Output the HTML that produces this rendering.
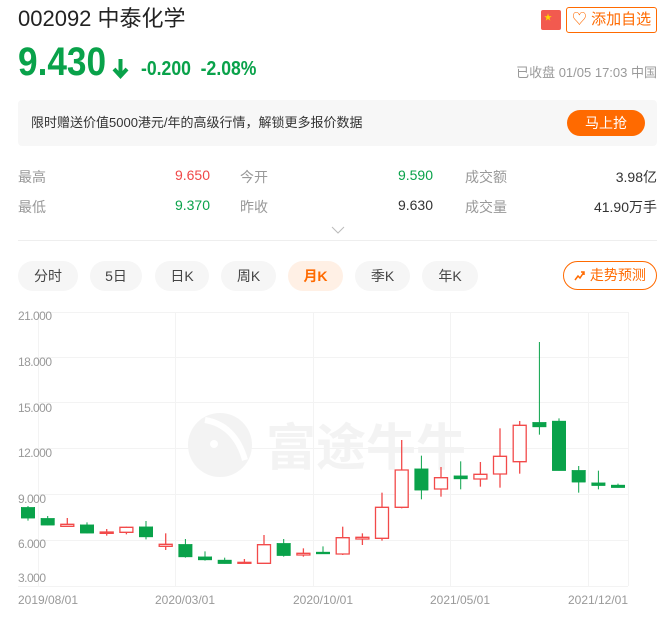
<!DOCTYPE html>
<html><head><meta charset="utf-8"><style>
*{margin:0;padding:0;box-sizing:border-box}
body{width:659px;height:621px;overflow:hidden;background:#fff;font-family:"Liberation Sans","Noto Sans CJK SC",sans-serif;position:relative;color:#333}
.a{position:absolute;white-space:nowrap}
.g{color:#09a24a}
.lab{color:#999;font-size:14px}
.val{font-size:14px;text-align:right}
.tab{position:absolute;top:261px;height:30px;border-radius:15px;background:#f6f6f6;font-size:14px;line-height:30px;text-align:center;color:#444}
</style></head><body>
<div class="a" style="left:18px;top:5px;font-size:22px;line-height:28px;color:#222">002092 中泰化学</div>
<div class="a" style="left:541px;top:10px;width:20px;height:20px;background:#f25a4f;border-radius:2px"><span style="position:absolute;left:3px;top:2px;color:#ffd800;font-size:8px">★</span></div>
<div class="a" style="left:566px;top:7px;width:91px;height:26px;border:1px solid #ff6a00;border-radius:3px;color:#ff6a00;font-size:15px;line-height:24px;text-align:center">♡ 添加自选</div>
<div class="a g" style="left:18px;top:40px;font-size:40px;font-weight:bold;line-height:44px;transform:scaleX(.88);transform-origin:left">9.430</div>
<svg class="a" style="left:112px;top:58px" width="17" height="21"><path d="M8.5 1V18M2 11L8.5 18L15 11" stroke="#09a24a" stroke-width="4" fill="none"/></svg>
<div class="a g" style="left:141px;top:58px;font-size:20px;font-weight:bold;line-height:22px;transform:scaleX(.88);transform-origin:left">-0.200&nbsp;&nbsp;-2.08%</div>
<div class="a" style="right:2px;top:62px;font-size:13px;color:#999">已收盘 01/05 17:03 中国</div>
<div class="a" style="left:18px;top:100px;width:639px;height:46px;background:#f7f7f7;border-radius:4px"></div>
<div class="a" style="left:31px;top:114px;font-size:13px;line-height:18px;color:#333">限时赠送价值5000港元/年的高级行情，解锁更多报价数据</div>
<div class="a" style="left:567px;top:110px;width:78px;height:26px;background:#ff6a00;border-radius:13px;color:#fff;font-size:14px;line-height:26px;text-align:center">马上抢</div>
<div class="a lab" style="left:18px;top:167px">最高</div><div class="a val" style="right:449px;top:167px;color:#f04848">9.650</div>
<div class="a lab" style="left:240px;top:167px">今开</div><div class="a val" style="right:226px;top:167px;color:#09a24a">9.590</div>
<div class="a lab" style="left:465px;top:167px">成交额</div><div class="a val" style="right:2px;top:167px">3.98亿</div>
<div class="a lab" style="left:18px;top:197px">最低</div><div class="a val" style="right:449px;top:197px;color:#09a24a">9.370</div>
<div class="a lab" style="left:240px;top:197px">昨收</div><div class="a val" style="right:226px;top:197px">9.630</div>
<div class="a lab" style="left:465px;top:197px">成交量</div><div class="a val" style="right:2px;top:197px">41.90万手</div>
<svg class="a" style="left:331px;top:226px" width="14" height="8"><path d="M1 1L7 7L13 1" stroke="#bbb" fill="none"/></svg>
<div class="a" style="left:18px;top:240px;width:639px;height:1px;background:#eee"></div>
<div class="tab" style="left:18px;width:60px">分时</div>
<div class="tab" style="left:90px;width:52px">5日</div>
<div class="tab" style="left:155px;width:54px">日K</div>
<div class="tab" style="left:221px;width:55px">周K</div>
<div class="tab" style="left:288px;width:55px;background:#fff0e5;color:#ff6a00;font-weight:bold">月K</div>
<div class="tab" style="left:355px;width:55px">季K</div>
<div class="tab" style="left:422px;width:56px">年K</div>
<div class="a" style="left:563px;top:261px;width:94px;height:29px;border:1px solid #ff6a00;border-radius:15px;color:#ff6a00;font-size:14px;line-height:27px;text-align:center"><svg width="12" height="11" style="vertical-align:-1px"><path d="M1 10L4 6L6 8L10 2M7 2H10V5" stroke="#ff6a00" stroke-width="1.5" fill="none"/></svg> 走势预测</div>
<svg class="a" style="left:0;top:300px" width="659" height="321">
<g stroke="#f3f3f3" stroke-width="1">
<line x1="38" y1="12.5" x2="628" y2="12.5"/><line x1="38" y1="57.5" x2="628" y2="57.5"/><line x1="38" y1="102.5" x2="628" y2="102.5"/><line x1="38" y1="148.5" x2="628" y2="148.5"/><line x1="38" y1="194.5" x2="628" y2="194.5"/><line x1="38" y1="240.5" x2="628" y2="240.5"/><line x1="18" y1="286.5" x2="628" y2="286.5"/>
<line x1="38.5" y1="12" x2="38.5" y2="286"/><line x1="175.5" y1="12" x2="175.5" y2="286"/><line x1="313.5" y1="12" x2="313.5" y2="286"/><line x1="450.5" y1="12" x2="450.5" y2="286"/><line x1="588.5" y1="12" x2="588.5" y2="286"/><line x1="628.5" y1="12" x2="628.5" y2="286"/>
</g>
<circle cx="220" cy="145" r="32" fill="#f3f3f3"/><path d="M205 120 Q235 125 245 160" stroke="#fff" stroke-width="6" fill="none"/><circle cx="214" cy="144" r="4" fill="#fff"/>
<text x="266" y="165" font-size="50" fill="#f3f3f3" font-family="Noto Sans CJK SC" font-weight="bold">富途牛牛</text>
<g font-size="12" fill="#999">
<text x="18" y="20" textLength="34">21.000</text><text x="18" y="66" textLength="34">18.000</text><text x="18" y="112" textLength="34">15.000</text><text x="18" y="157" textLength="34">12.000</text><text x="18" y="203" textLength="28">9.000</text><text x="18" y="248" textLength="28">6.000</text><text x="18" y="282" textLength="28">3.000</text>
<text x="18" y="304" textLength="60">2019/08/01</text><text x="155" y="304" textLength="60">2020/03/01</text><text x="293" y="304" textLength="60">2020/10/01</text><text x="430" y="304" textLength="60">2021/05/01</text><text x="568" y="304" textLength="60">2021/12/01</text>
</g>
<g transform="scale(1,0.33333)">
<g stroke="#09a24a" fill="#09a24a">
<line x1="28" x2="28" y1="618" y2="662" vector-effect="non-scaling-stroke"/><rect x="21.5" y="622" width="13" height="33"/>
<line x1="47.7" x2="47.7" y1="648" y2="676" vector-effect="non-scaling-stroke"/><rect x="41.2" y="655" width="13" height="21"/>
<line x1="87" x2="87" y1="667" y2="700" vector-effect="non-scaling-stroke"/><rect x="80.5" y="674" width="13" height="26"/>
<line x1="146" x2="146" y1="663" y2="718" vector-effect="non-scaling-stroke"/><rect x="139.5" y="680" width="13" height="31"/>
<line x1="185.4" x2="185.4" y1="717" y2="773" vector-effect="non-scaling-stroke"/><rect x="178.9" y="733" width="13" height="38"/>
<line x1="205" x2="205" y1="754" y2="782" vector-effect="non-scaling-stroke"/><rect x="198.5" y="770" width="13" height="10"/>
<line x1="224.7" x2="224.7" y1="773" y2="791" vector-effect="non-scaling-stroke"/><rect x="218.2" y="780" width="13" height="11"/>
<line x1="283.7" x2="283.7" y1="717" y2="770" vector-effect="non-scaling-stroke"/><rect x="277.2" y="730" width="13" height="37"/>
<line x1="323" x2="323" y1="739" y2="762" vector-effect="non-scaling-stroke"/><rect x="316.5" y="756" width="13" height="6"/>
<line x1="421.4" x2="421.4" y1="467" y2="598" vector-effect="non-scaling-stroke"/><rect x="414.9" y="506" width="13" height="65"/>
<line x1="460.7" x2="460.7" y1="484" y2="568" vector-effect="non-scaling-stroke"/><rect x="454.2" y="527" width="13" height="10"/>
<line x1="539.4" x2="539.4" y1="126" y2="404" vector-effect="non-scaling-stroke"/><rect x="532.9" y="367" width="13" height="14"/>
<line x1="559" x2="559" y1="355" y2="512" vector-effect="non-scaling-stroke"/><rect x="552.5" y="363" width="13" height="149"/>
<line x1="578.7" x2="578.7" y1="498" y2="578" vector-effect="non-scaling-stroke"/><rect x="572.2" y="511" width="13" height="36"/>
<line x1="598.4" x2="598.4" y1="512" y2="568" vector-effect="non-scaling-stroke"/><rect x="591.9" y="548" width="13" height="9"/>
<line x1="618" x2="618" y1="551" y2="563" vector-effect="non-scaling-stroke"/><rect x="611.5" y="555" width="13" height="8"/>
</g>
<g stroke="#f24a4a" fill="#fff" stroke-width="1.3">
<line x1="67.3" x2="67.3" y1="654" y2="679" vector-effect="non-scaling-stroke"/><rect x="60.8" y="673" width="13" height="6" vector-effect="non-scaling-stroke"/>
<line x1="106.7" x2="106.7" y1="687" y2="707" vector-effect="non-scaling-stroke"/><rect x="100.2" y="696" width="13" height="4" vector-effect="non-scaling-stroke"/>
<line x1="126.4" x2="126.4" y1="680" y2="703" vector-effect="non-scaling-stroke"/><rect x="119.9" y="682" width="13" height="15" vector-effect="non-scaling-stroke"/>
<line x1="165.7" x2="165.7" y1="700" y2="750" vector-effect="non-scaling-stroke"/><rect x="159.2" y="733" width="13" height="6" vector-effect="non-scaling-stroke"/>
<line x1="244.4" x2="244.4" y1="777" y2="790" vector-effect="non-scaling-stroke"/><rect x="237.9" y="787" width="13" height="3" vector-effect="non-scaling-stroke"/>
<line x1="264" x2="264" y1="705" y2="790" vector-effect="non-scaling-stroke"/><rect x="257.5" y="734" width="13" height="56" vector-effect="non-scaling-stroke"/>
<line x1="303.4" x2="303.4" y1="745" y2="770" vector-effect="non-scaling-stroke"/><rect x="296.9" y="760" width="13" height="5" vector-effect="non-scaling-stroke"/>
<line x1="342.7" x2="342.7" y1="680" y2="765" vector-effect="non-scaling-stroke"/><rect x="336.2" y="713" width="13" height="49" vector-effect="non-scaling-stroke"/>
<line x1="362.4" x2="362.4" y1="700" y2="735" vector-effect="non-scaling-stroke"/><rect x="355.9" y="712" width="13" height="5" vector-effect="non-scaling-stroke"/>
<line x1="382" x2="382" y1="578" y2="722" vector-effect="non-scaling-stroke"/><rect x="375.5" y="622" width="13" height="93" vector-effect="non-scaling-stroke"/>
<line x1="401.7" x2="401.7" y1="420" y2="625" vector-effect="non-scaling-stroke"/><rect x="395.2" y="510" width="13" height="112" vector-effect="non-scaling-stroke"/>
<line x1="441" x2="441" y1="501" y2="590" vector-effect="non-scaling-stroke"/><rect x="434.5" y="533" width="13" height="34" vector-effect="non-scaling-stroke"/>
<line x1="480.4" x2="480.4" y1="486" y2="560" vector-effect="non-scaling-stroke"/><rect x="473.9" y="523" width="13" height="14" vector-effect="non-scaling-stroke"/>
<line x1="500" x2="500" y1="385" y2="563" vector-effect="non-scaling-stroke"/><rect x="493.5" y="469" width="13" height="53" vector-effect="non-scaling-stroke"/>
<line x1="519.7" x2="519.7" y1="363" y2="521" vector-effect="non-scaling-stroke"/><rect x="513.2" y="376" width="13" height="109" vector-effect="non-scaling-stroke"/>
</g>
</g>
</svg>
</body></html>
